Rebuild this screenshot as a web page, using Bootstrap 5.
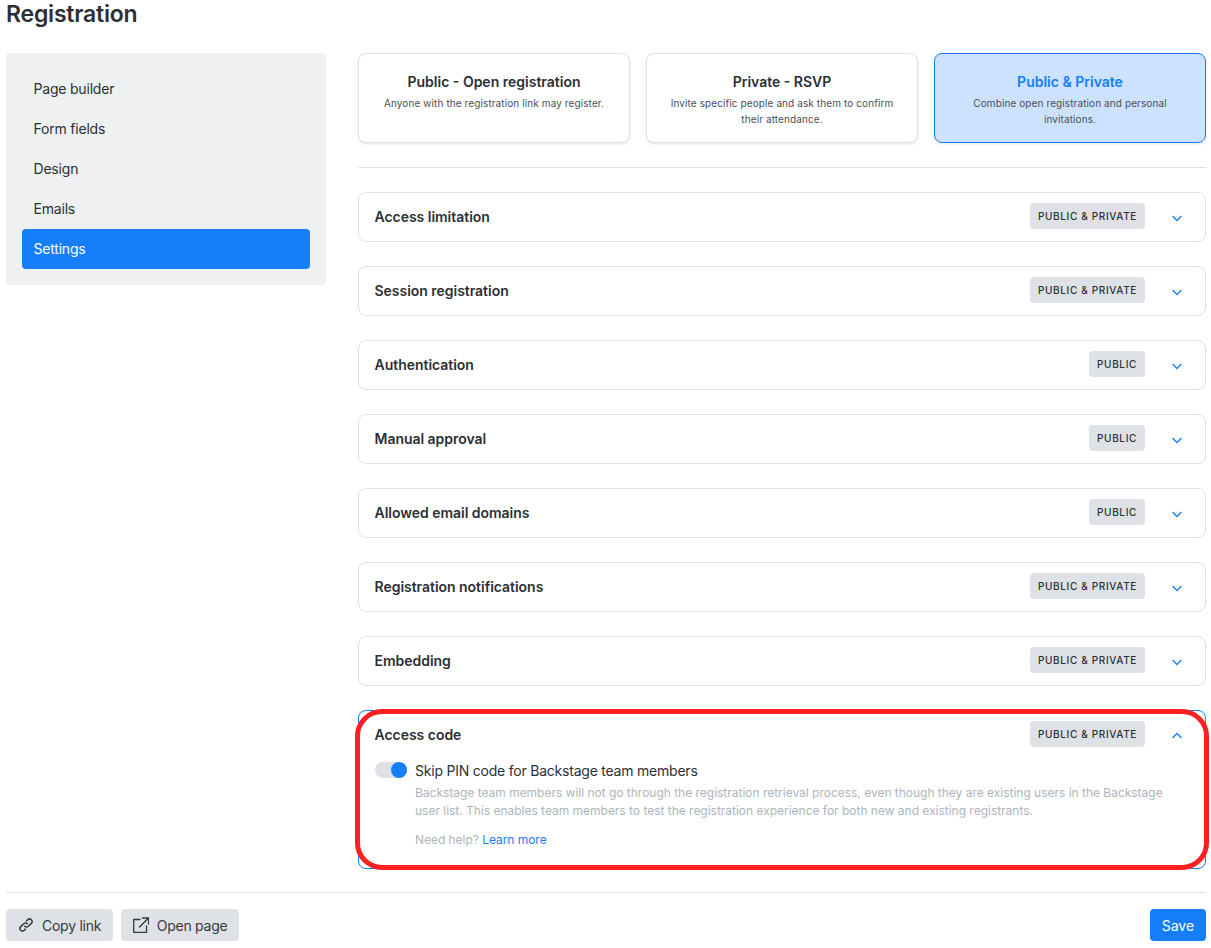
<!DOCTYPE html>
<html lang="en">
<head>
<meta charset="utf-8">
<title>Registration</title>
<link href="https://cdn.jsdelivr.net/npm/bootstrap@5.3.0/dist/css/bootstrap.min.css" rel="stylesheet">
<style>
html,body{height:948px;overflow:hidden}
body{font-family:Inter,"Liberation Sans",sans-serif;color:#2b3035;font-size:14px;background:#fff}
.shell{padding:0 5px 0 6px;display:flex;flex-direction:column;height:948px}
.page-title{font-size:23px;font-weight:600;line-height:28px;margin:0;color:#2b3035;height:53px;letter-spacing:-.2px}
.side{width:320px;flex:none;background:#eef0f2;border-radius:4px;padding:16px;height:232px}
.side a{display:block;height:40px;line-height:40px;padding:0 11.5px;border-radius:4px;color:#2b3035;text-decoration:none;font-size:14px;letter-spacing:-.2px}
.side a.on{background:#157efb;color:#fff}
.main-col{width:848px;margin-left:32px;flex:none}
.mode{flex:1 1 0;height:90px;background:#fff;border:1px solid #dee2e6;border-radius:8px;box-shadow:0 1px 3px rgba(0,0,0,.1);text-align:center;padding:19px 16px 0}
.mode h6{font-size:14px;font-weight:600;line-height:17px;margin:0 0 5px;color:#2b3035;letter-spacing:0}
.mode p{font-size:10px;line-height:16px;margin:0;color:#495057;letter-spacing:.1px}
.mode.sel{background:#cce2fe;border-color:#157efb}
.mode.sel h6{color:#157efb}
.rule{height:1px;background:#dee2e6}
.acc{border:1px solid #dee2e6;border-radius:8px;background:#fff;margin-bottom:24px}
.acc-h{height:48px;display:flex;align-items:center;padding:0 22px 2px 15.5px}
.acc-t{font-weight:600;font-size:14px;flex:1;letter-spacing:-.03px}
.tagchip{background:#dee2e6;color:#2b3035;font-size:10px;font-weight:500;letter-spacing:.64px;line-height:26px;height:26px;padding:0 8px;border-radius:4px}
.chev{width:12px;height:12px;margin-left:26px;margin-top:3px;flex:none}
.acc.open{border-color:#157efb;height:159px;margin-bottom:0}
.swrow{display:flex;padding:0 16px}
.sw{width:32px;height:16px;border-radius:8px;background:#dee2e6;position:relative;flex:none;margin:3px 8px 0 0}
.sw::after{content:"";position:absolute;right:0;top:0;width:16px;height:16px;border-radius:50%;background:#157efb}
.sw-l{font-size:14px;line-height:24px;letter-spacing:-.22px;margin-bottom:1px}
.sw-d{font-size:12px;line-height:18px;color:#adb5bd;margin:0;width:760px;letter-spacing:-.015px}
.sw-h{font-size:12px;line-height:18px;color:#adb5bd;margin:11px 0 0;letter-spacing:-.04px}
.sw-h a{color:#157efb;text-decoration:none}
.foot{margin-top:auto;border-top:1px solid #dee2e6;padding:16px 0 7px;display:flex;align-items:center;gap:8px}
.fbtn{height:32px;background:#dee2e6;border:0;border-radius:4px;font-size:14px;color:#343a40;padding:0 11.5px 0 12px;display:flex;align-items:center;gap:8px;letter-spacing:-.25px}
.savebtn{height:32px;background:#157efb;border:0;border-radius:4px;font-size:14px;color:#fff;padding:0 12px;margin-left:auto;letter-spacing:-.05px}
.annot{position:absolute;left:355px;top:709px;width:854px;height:161px;border:5px solid #fe2020;border-radius:27px;pointer-events:none}
</style>
</head>
<body>
<div class="shell">
  <h1 class="page-title">Registration</h1>
  <div class="d-flex">
    <nav class="side">
      <a href="#">Page builder</a>
      <a href="#">Form fields</a>
      <a href="#">Design</a>
      <a href="#">Emails</a>
      <a href="#" class="on">Settings</a>
    </nav>
    <div class="main-col">
      <div class="d-flex gap-3">
        <div class="mode"><h6>Public - Open registration</h6><p>Anyone with the registration link may register.</p></div>
        <div class="mode"><h6>Private - RSVP</h6><p>Invite specific people and ask them to confirm their attendance.</p></div>
        <div class="mode sel"><h6>Public &amp; Private</h6><p>Combine open registration and personal invitations.</p></div>
      </div>
      <div class="rule" style="margin:24px 0"></div>
      <div class="acc"><div class="acc-h"><span class="acc-t">Access limitation</span><span class="tagchip">PUBLIC &amp; PRIVATE</span><svg class="chev" viewBox="0 0 12 12" fill="none" stroke="#157efb" stroke-width="1.3"><path d="M1.500 4 6 8.500 10.500 4"/></svg></div></div>
      <div class="acc"><div class="acc-h"><span class="acc-t">Session registration</span><span class="tagchip">PUBLIC &amp; PRIVATE</span><svg class="chev" viewBox="0 0 12 12" fill="none" stroke="#157efb" stroke-width="1.3"><path d="M1.500 4 6 8.500 10.500 4"/></svg></div></div>
      <div class="acc"><div class="acc-h"><span class="acc-t">Authentication</span><span class="tagchip">PUBLIC</span><svg class="chev" viewBox="0 0 12 12" fill="none" stroke="#157efb" stroke-width="1.3"><path d="M1.500 4 6 8.500 10.500 4"/></svg></div></div>
      <div class="acc"><div class="acc-h"><span class="acc-t">Manual approval</span><span class="tagchip">PUBLIC</span><svg class="chev" viewBox="0 0 12 12" fill="none" stroke="#157efb" stroke-width="1.3"><path d="M1.500 4 6 8.500 10.500 4"/></svg></div></div>
      <div class="acc"><div class="acc-h"><span class="acc-t">Allowed email domains</span><span class="tagchip">PUBLIC</span><svg class="chev" viewBox="0 0 12 12" fill="none" stroke="#157efb" stroke-width="1.3"><path d="M1.500 4 6 8.500 10.500 4"/></svg></div></div>
      <div class="acc"><div class="acc-h"><span class="acc-t">Registration notifications</span><span class="tagchip">PUBLIC &amp; PRIVATE</span><svg class="chev" viewBox="0 0 12 12" fill="none" stroke="#157efb" stroke-width="1.3"><path d="M1.500 4 6 8.500 10.500 4"/></svg></div></div>
      <div class="acc"><div class="acc-h"><span class="acc-t">Embedding</span><span class="tagchip">PUBLIC &amp; PRIVATE</span><svg class="chev" viewBox="0 0 12 12" fill="none" stroke="#157efb" stroke-width="1.3"><path d="M1.500 4 6 8.500 10.500 4"/></svg></div></div>
      <div class="acc open">
        <div class="acc-h"><span class="acc-t">Access code</span><span class="tagchip">PUBLIC &amp; PRIVATE</span><svg class="chev" viewBox="0 0 12 12" fill="none" stroke="#157efb" stroke-width="1.3"><path d="M1.500 8 6 3.500 10.500 8"/></svg></div>
        <div class="swrow">
          <span class="sw"></span>
          <div>
            <div class="sw-l">Skip PIN code for Backstage team members</div>
            <p class="sw-d">Backstage team members will not go through the registration retrieval process, even though they are existing users in the Backstage user list. This enables team members to test the registration experience for both new and existing registrants.</p>
            <p class="sw-h">Need help? <a href="#">Learn more</a></p>
          </div>
        </div>
      </div>
    </div>
  </div>
  <div class="foot">
    <button class="fbtn"><svg width="16" height="16" viewBox="0 0 16 16" fill="none" stroke="#343a40" stroke-width="1.5" stroke-linecap="round"><path d="M6.700 9.300a2.500 2.500 0 0 0 3.600 0l3-2.900a2.500 2.500 0 0 0-3.600-3.600l-1.100 1.100"/><path d="M9.300 6.700a2.500 2.500 0 0 0-3.600 0l-3 2.900a2.500 2.500 0 0 0 3.600 3.600l1.100-1.100"/></svg>Copy link</button>
    <button class="fbtn"><svg width="16" height="16" viewBox="0 0 16 16" fill="none" stroke="#343a40" stroke-width="1.300" stroke-linecap="round"><path d="M7 2.500H.7v12.800h12.800V9"/><path d="M6.500 10 15 1.500M9.500 1H15.500V7"/></svg>Open page</button>
    <button class="savebtn">Save</button>
  </div>
</div>
<div class="annot"></div>
</body>
</html>
